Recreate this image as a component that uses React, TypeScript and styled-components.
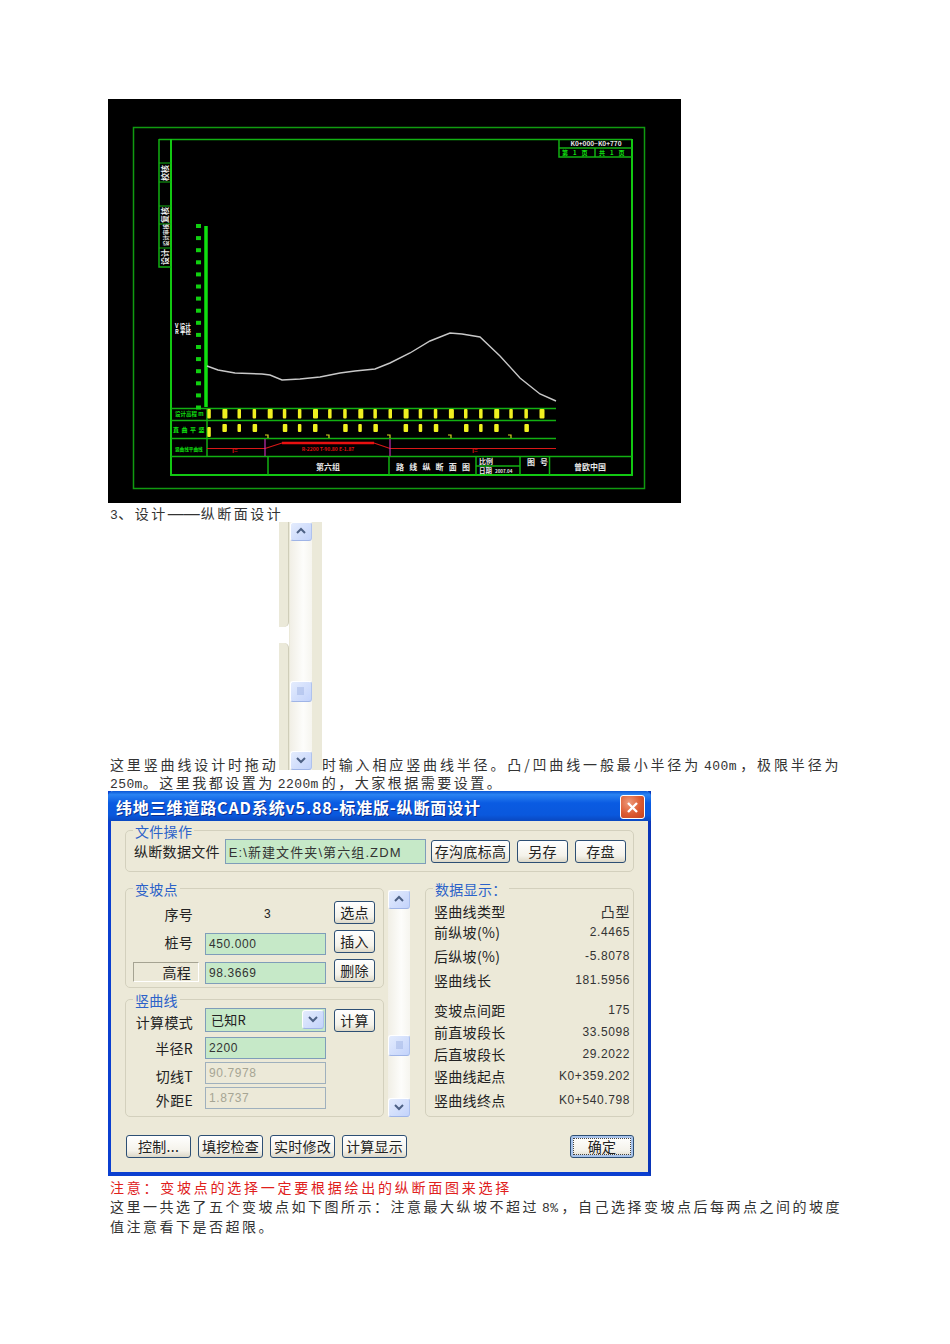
import styled, { createGlobalStyle } from "styled-components";

const GlobalStyle = createGlobalStyle`
  html, body {
    margin: 0;
    padding: 0;
    background: #fff;
  }
`;

const CJK = `"Noto Sans CJK SC", sans-serif`;
const LATIN = `"Liberation Mono", monospace`;
const NUM_FONT = `"Liberation Sans", "Noto Sans CJK SC", sans-serif`;
const COMMA = "\uFF0C";
const COLON = "\uFF1A";

// document
const Page = styled.div`
  box-sizing: border-box;
  width: 950px;
  height: 1344px;
  padding: 99px 0 0 108px;
  overflow: hidden;
`;

const Doc = styled.div<{ $top: number }>`
  width: 733px;
  margin-top: ${(p) => p.$top}px;
  font-family: ${CJK};
  font-size: 14px;
  color: #333;
`;

const Line = styled.div<{ $fit?: boolean; $red?: boolean; $pull?: number }>`
  margin-top: ${(p) => p.$pull ?? 0}px;
  padding-left: 2px;
  line-height: 19.5px;
  letter-spacing: ${(p) => (p.$red ? 2.75 : 2.5)}px;
  white-space: nowrap;
  color: ${(p) => (p.$red ? "#e0201c" : "#333")};
  text-align: ${(p) => (p.$fit ? "justify" : "left")};
  text-align-last: ${(p) => (p.$fit ? "justify" : "left")};
`;

const Latin = styled.span`
  margin: 0 3px;
  font-family: ${LATIN};
  font-size: 13px;
  line-height: 1;
  letter-spacing: 0.4px;
`;

const LeadLatin = styled(Latin)`
  margin: 0;
`;

const Dash = styled.span`
  margin: 0 1px 0 0;
  font-family: "Liberation Sans", sans-serif;
  font-size: 16px;
  line-height: 1;
  letter-spacing: 0;
`;

const CadFrame = styled.svg`
  display: block;
  width: 573px;
  height: 404px;
  background: #000;
`;

// xp scrollbar
const ScrollBox = styled.span`
  display: inline-block;
  overflow: hidden;
  width: 43px;
  height: 248px;
`;

const ScrollInner = styled.span`
  display: flex;
  height: 100%;
  background: #ebe9d9;
`;

const ScrollEdge = styled.span`
  display: flex;
  flex-direction: column;
  width: 10px;
  background: #fff;
`;

const EdgeTop = styled.span`
  display: block;
  height: 105px;
  background: #ebe9d9;
  border-right: 1px solid #cfcdb9;
  border-bottom-right-radius: 5px;
`;

const EdgeBottom = styled.span`
  display: block;
  flex: 1;
  margin-top: 16px;
  background: #ebe9d9;
  border-right: 1px solid #cfcdb9;
  border-top-right-radius: 5px;
`;

const Track = styled.span<{ $narrow?: boolean }>`
  display: flex;
  flex-direction: column;
  box-sizing: border-box;
  width: 22px;
  height: 100%;
  background: linear-gradient(90deg, #f1efe6 0%, #fdfdfb 60%, #f6f5ef 100%);
  ${(p) => (p.$narrow ? "" : "margin-left: 1px;")}
`;

const ScrollCap = styled.span`
  display: flex;
  align-items: center;
  justify-content: center;
  box-sizing: border-box;
  flex: none;
  width: 22px;
  height: 19px;
  background: linear-gradient(135deg, #e4ecfd 0%, #c3d3fb 100%);
  border: 1px solid #fff;
  border-bottom-color: #9fb4e6;
  border-right-color: #afc2ee;
  border-radius: 3px;
`;

const ScrollThumb = styled(ScrollCap)<{ $top: number }>`
  height: 21px;
  margin-top: ${(p) => p.$top}px;
`;

const Spring = styled.span`
  flex: 1;
`;

const Chevron = ({ up }: { up?: boolean }) => (
  <svg width="10" height="8" viewBox="0 0 10 8">
    <path
      d={up ? "M1 6 L5 2 L9 6" : "M1 2 L5 6 L9 2"}
      fill="none"
      stroke="#4d6185"
      strokeWidth="2"
    />
  </svg>
);

const Grip = () => (
  <svg width="9" height="9" viewBox="0 0 9 9">
    <path d="M1 1 H8 M1 3 H8 M1 5 H8 M1 7 H8" stroke="#a0b4e4" strokeWidth="1" />
  </svg>
);

const Scrollbar = ({ thumbTop, narrow }: { thumbTop: number; narrow?: boolean }) => (
  <Track $narrow={narrow}>
    <ScrollCap>
      <Chevron up />
    </ScrollCap>
    <ScrollThumb $top={thumbTop}>
      <Grip />
    </ScrollThumb>
    <Spring />
    <ScrollCap>
      <Chevron />
    </ScrollCap>
  </Track>
);

// dialog
const Dialog = styled.div`
  box-sizing: border-box;
  width: 543px;
  height: 385px;
  margin-top: -2px;
  background: #ece9d8;
  border: 3px solid #0b3fd0;
  border-top: 0;
  border-bottom-width: 4px;
  border-right-color: #0a35b8;
  font-family: ${CJK};
  font-size: 14px;
  letter-spacing: 0.3px;
  color: #222;
`;

const TitleBar = styled.div`
  display: flex;
  align-items: center;
  justify-content: space-between;
  box-sizing: border-box;
  height: 30px;
  margin: 0 -3px;
  padding: 3px 6px 0 8px;
  background: linear-gradient(180deg, #0a57d6 0%, #2a83f2 12%, #0a5be2 40%, #0a58dd 80%, #0a48c0 100%);
  border-radius: 5px 5px 0 0;
`;

const TitleText = styled.div`
  font-size: 16px;
  font-weight: 700;
  letter-spacing: 0.85px;
  color: #fff;
  text-shadow: 1px 1px 0 #0a2f90;
  white-space: nowrap;
`;

const CloseButton = styled.div`
  display: flex;
  align-items: center;
  justify-content: center;
  box-sizing: border-box;
  width: 25px;
  height: 24px;
  background: radial-gradient(circle at 35% 30%, #ee9a7a 0%, #dc5a30 55%, #c4411f 100%);
  border: 1px solid #fff;
  border-radius: 3px;
`;

const DialogBody = styled.div`
  display: flex;
  flex-direction: column;
  padding: 2px 14px 0;
`;

const Group = styled.fieldset<{ $gapTop?: number; $width?: number }>`
  box-sizing: border-box;
  min-width: 0;
  width: ${(p) => (p.$width ? `${p.$width}px` : "auto")};
  margin: ${(p) => p.$gapTop ?? 0}px 0 0;
  padding: 0;
  border: 1px solid #d3d0bd;
  border-radius: 5px;
`;

const GroupTitle = styled.legend`
  margin-left: 7px;
  padding: 0 2px;
  font-size: 14px;
  line-height: 16px;
  color: #2b62c9;
`;

const FileRow = styled.div`
  display: flex;
  align-items: center;
  height: 25px;
  padding: 0 7px 7px 8px;
`;

const FileLabel = styled.span`
  width: 91px;
  white-space: nowrap;
`;

const TextBox = styled.div<{ $disabled?: boolean; $width?: number }>`
  display: flex;
  align-items: center;
  box-sizing: border-box;
  width: ${(p) => p.$width ?? 121}px;
  height: 22px;
  padding: 0 3px;
  background: ${(p) => (p.$disabled ? "#ece9d8" : "#c6e9c8")};
  border: 1px solid ${(p) => (p.$disabled ? "#9fb0bd" : "#7f9db9")};
  font-family: ${NUM_FONT};
  font-size: 12px;
  letter-spacing: 0.6px;
  color: ${(p) => (p.$disabled ? "#a6a594" : "#333")};
  white-space: nowrap;
  overflow: hidden;
`;

const PathBox = styled(TextBox)`
  height: 25px;
  font-size: 13px;
  letter-spacing: 1.1px;
`;

const XpButton = styled.div<{ $width?: number; $main?: boolean; $offset?: number }>`
  display: flex;
  align-items: center;
  justify-content: center;
  box-sizing: border-box;
  flex: none;
  width: ${(p) => p.$width ?? 41}px;
  height: 23px;
  margin-top: ${(p) => p.$offset ?? 0}px;
  margin-left: ${(p) => (p.$main ? "auto" : "0")};
  background: linear-gradient(180deg, #fff 0%, #f4f2ea 70%, #dcd8c8 100%);
  border: 1px solid #2d4f74;
  border-radius: 3px;
  box-shadow: ${(p) => (p.$main ? "inset 0 0 0 2px #a9c4ec" : "none")};
  outline: ${(p) => (p.$main ? "1px dotted #444" : "none")};
  outline-offset: -4px;
  font-size: 14px;
  line-height: 1;
  color: #222;
  white-space: nowrap;
`;

const FileActions = styled.div`
  display: flex;
  margin-left: 5px;
  gap: 7px;
`;

const LowerRow = styled.div`
  display: flex;
  align-items: stretch;
  margin-top: 9px;
`;

const LeftColumn = styled.div`
  display: flex;
  flex-direction: column;
  width: 259px;
`;

const FormRows = styled.div<{ $top: number; $bottom: number }>`
  display: flex;
  flex-direction: column;
  gap: 4px;
  padding: ${(p) => p.$top}px 8px ${(p) => p.$bottom}px 7px;
`;

const FormRow = styled.div<{ $height?: number }>`
  display: grid;
  grid-template-columns: 66px 121px 43px;
  column-gap: 6px;
  align-items: start;
  height: ${(p) => p.$height ?? 25}px;
  & > :nth-child(3) {
    margin-left: 2px;
  }
`;

const FormLabel = styled.div<{ $sunken?: boolean; $offset?: number }>`
  box-sizing: border-box;
  height: ${(p) => (p.$sunken ? 20 : 22)}px;
  margin-top: ${(p) => p.$offset ?? 0}px;
  padding-right: ${(p) => (p.$sunken ? 7 : 6)}px;
  text-align: right;
  line-height: ${(p) => (p.$sunken ? 18 : 22)}px;
  white-space: nowrap;
  border: ${(p) => (p.$sunken ? "1px solid" : "0")};
  border-color: #a5a392 #fff #fff #a5a392;
`;

const Value = styled.div`
  margin-top: 2px;
  padding-left: 59px;
  font-family: ${NUM_FONT};
  font-size: 12px;
  line-height: 22px;
`;

const InputSlot = styled.div<{ $offset?: number }>`
  margin-top: ${(p) => p.$offset ?? 0}px;
`;

const Combo = styled.div`
  display: flex;
  box-sizing: border-box;
  width: 121px;
  height: 24px;
  background: #c6e9c8;
  border: 1px solid #7f9db9;
  padding: 1px;
`;

const ComboText = styled.div`
  flex: 1;
  padding-left: 4px;
  font-size: 13px;
  line-height: 19px;
`;

const ScrollSlot = styled.div`
  display: flex;
  flex: none;
  margin: 9px 15px 0 4px;
`;

const DataRows = styled.div`
  display: flex;
  flex-direction: column;
  padding: 3px 3px 3px 8px;
`;

const DataRow = styled.div<{ $space: number }>`
  display: flex;
  align-items: center;
  justify-content: space-between;
  height: 22px;
  margin-top: ${(p) => p.$space}px;
`;

const DataValue = styled.span<{ $word?: boolean }>`
  font-family: ${NUM_FONT};
  font-size: ${(p) => (p.$word ? 14 : 12)}px;
  letter-spacing: 0.6px;
  color: #333;
`;

const BottomBar = styled.div`
  display: flex;
  gap: 7px;
  margin-top: 18px;
  padding-left: 1px;
`;

const dataRows = [
  { label: "竖曲线类型", value: "凸型", space: 0, word: true },
  { label: "前纵坡(%)", value: "2.4465", space: -1 },
  { label: "后纵坡(%)", value: "-5.8078", space: 2 },
  { label: "竖曲线长", value: "181.5956", space: 2 },
  { label: "变坡点间距", value: "175", space: 8 },
  { label: "前直坡段长", value: "33.5098", space: 0 },
  { label: "后直坡段长", value: "29.2022", space: 0 },
  { label: "竖曲线起点", value: "K0+359.202", space: 0 },
  { label: "竖曲线终点", value: "K0+540.798", space: 2 },
];

// cad drawing, coordinates are picture pixels
const profile: [number, number][] = [
  [99, 267], [110, 271], [127, 274], [154, 275], [162, 276], [174, 281], [192, 280], [212, 278],
  [232, 274], [247, 272], [267, 270], [282, 264], [302, 254], [322, 242], [342, 234], [354, 235],
  [372, 238], [392, 257], [412, 279], [432, 295], [448, 302],
];

const markX = Array.from({ length: 23 }, (_, i) => 101.3 + i * 15.1);
const tickY = Array.from({ length: 16 }, (_, i) => 127 + i * 12.1);
const lowRowSkip = [4, 8, 12, 16, 20, 22];
const hookX = [157, 218, 279, 340, 400];

const CadLabel = styled.text`
  font-family: ${CJK};
  font-weight: 700;
`;

const CadDrawing = () => (
  <CadFrame viewBox="0 0 573 404">
    <g fill="none">
      <rect x="25.5" y="28.5" width="511" height="361" stroke="#109a10" strokeWidth="1.5" />
      <path d="M51 40.5 H524" stroke="#12b012" strokeWidth="1.5" />
      <path d="M524 40 V376 H63 V40" stroke="#12c812" strokeWidth="2" />
      <path d="M51 40 V168 H63" stroke="#12b012" strokeWidth="1.5" />
      <path d="M51 64 H63 M51 83 H63 M51 107 H63 M51 125 H63 M51 149 H63" stroke="#12b012" />
      <path d="M451 40 V58 H524 M451 49 H524 M487 49 V58" stroke="#12b012" strokeWidth="1.5" />
      <path d="M63 309.5 H448 M63 321.5 H448 M63 339.5 H448 M63 357.5 H524" stroke="#12b012" strokeWidth="1.5" />
      <path d="M99 309 V357" stroke="#12b012" strokeWidth="1.5" />
      <path d="M160 357 V376 M281 357 V376 M368 357 V376 M412 357 V376 M441.5 357 V376 M368 367 H412" stroke="#12b012" strokeWidth="1.5" />
      <path d="M98 127 V308" stroke="#0fe00f" strokeWidth="3.5" />
    </g>
    {tickY.map((y) => (
      <rect key={y} x="88" y={y - 2} width="5" height="4" fill="#10d010" />
    ))}
    <polyline
      points={profile.map((p) => p.join(",")).join(" ")}
      fill="none"
      stroke="#c8c8c8"
      strokeWidth="1.4"
    />
    {markX.map((x, i) => (
      <rect key={x} x={x - 2} y="310" width={i % 3 === 1 ? 5 : 3.5} height="9.5" rx="1" fill="#f0f020" />
    ))}
    {markX.map((x, i) =>
      lowRowSkip.includes(i) ? null : (
        <rect key={x} x={x - 2} y={i === 0 ? 328 : 325} width={i % 2 ? 4.5 : 3.5} height={i === 0 ? 10 : 8} rx="1" fill="#f0f020" />
      )
    )}
    {hookX.map((x) => (
      <path key={x} d={`M${x} 336 h3 v3`} fill="none" stroke="#d8d820" strokeWidth="1.2" />
    ))}
    <path d="M99 349.5 H157 L174 344 H266 L282 349.5 H448" fill="none" stroke="#d81818" strokeWidth="1.2" />
    <path d="M174 344 H266" stroke="#e81010" strokeWidth="2.5" />
    <path d="M157 340 V357 M282 340 V357" stroke="#c030b0" strokeWidth="1.2" />
    <CadLabel x="67" y="317" fontSize="5.5" fill="#10e010">设计高程 m</CadLabel>
    <CadLabel x="65" y="333" fontSize="6" fill="#10e010" letterSpacing="2.5">直曲平竖</CadLabel>
    <CadLabel x="67" y="352" fontSize="4.6" fill="#10e010">竖曲线平曲线</CadLabel>
    <CadLabel x="67" y="229" fontSize="5.5" fill="#fff">V 设计</CadLabel>
    <CadLabel x="67" y="235" fontSize="5.5" fill="#fff">R 半径</CadLabel>
    <CadLabel x="124" y="354" fontSize="6" fill="#e01010">I=</CadLabel>
    <CadLabel x="364" y="354" fontSize="6" fill="#e01010">I=</CadLabel>
    <CadLabel x="220" y="352" fontSize="5" fill="#e01010" textAnchor="middle">R-2200 T-90.80 E-1.87</CadLabel>
    <CadLabel x="220" y="371" fontSize="8" fill="#e8e8e8" textAnchor="middle">第六组</CadLabel>
    <CadLabel x="288" y="371" fontSize="8" fill="#e8e8e8" letterSpacing="5.2">路线纵断面图</CadLabel>
    <CadLabel x="371" y="365" fontSize="7" fill="#e8e8e8">比例</CadLabel>
    <CadLabel x="371" y="374" fontSize="6.5" fill="#e8e8e8">日期</CadLabel>
    <CadLabel x="387" y="374" fontSize="4.5" fill="#e8e8e8">2007.04</CadLabel>
    <CadLabel x="419" y="366" fontSize="8" fill="#e8e8e8" letterSpacing="5">图号</CadLabel>
    <CadLabel x="482" y="371" fontSize="8" fill="#e8e8e8" textAnchor="middle">曾欧中国</CadLabel>
    <CadLabel x="488" y="47" fontSize="6.5" fill="#e8e8e8" textAnchor="middle">K0+000~K0+770</CadLabel>
    <CadLabel x="454" y="56" fontSize="6" fill="#10e010" letterSpacing="5">第1页</CadLabel>
    <CadLabel x="491" y="56" fontSize="6" fill="#10e010" letterSpacing="5">共1页</CadLabel>
    <CadLabel transform="translate(60 82) rotate(-90)" fontSize="8" fill="#eee">校核</CadLabel>
    <CadLabel transform="translate(60 124) rotate(-90)" fontSize="8" fill="#eee">复核</CadLabel>
    <CadLabel transform="translate(60 147) rotate(-90)" fontSize="5.5" fill="#eee">设计审核</CadLabel>
    <CadLabel transform="translate(60 166) rotate(-90)" fontSize="8" fill="#eee">设计</CadLabel>
  </CadFrame>
);

const App = () => {
  return (
    <>
      <GlobalStyle />
      <Page>
        <CadDrawing />
        <Doc $top={1}>
          <Line>
            <LeadLatin>3</LeadLatin>、设计<Dash>——</Dash>纵断面设计
          </Line>
          <Line $fit $pull={-2}>
            这里竖曲线设计时拖动
            <ScrollBox>
              <ScrollInner>
                <ScrollEdge>
                  <EdgeTop />
                  <EdgeBottom />
                </ScrollEdge>
                <Scrollbar thumbTop={140} />
              </ScrollInner>
            </ScrollBox>
            时输入相应竖曲线半径。凸/凹曲线一般最小半径为<Latin>400m</Latin>{COMMA}极限半径为
          </Line>
          <Line $pull={-1}>
            <LeadLatin>250m</LeadLatin>。这里我都设置为<Latin>2200m</Latin>的{COMMA}大家根据需要设置。
          </Line>
        </Doc>
        <Dialog>
          <TitleBar>
            <TitleText>纬地三维道路CAD系统v5.88-标准版-纵断面设计</TitleText>
            <CloseButton>
              <svg width="13" height="13" viewBox="0 0 13 13">
                <path d="M2 2 L11 11 M11 2 L2 11" stroke="#fff" strokeWidth="2.4" />
              </svg>
            </CloseButton>
          </TitleBar>
          <DialogBody>
            <Group>
              <GroupTitle>文件操作</GroupTitle>
              <FileRow>
                <FileLabel>纵断数据文件</FileLabel>
                <PathBox $width={202}>E:\新建文件夹\第六组.ZDM</PathBox>
                <FileActions>
                  <XpButton $width={79}>存沟底标高</XpButton>
                  <XpButton $width={51}>另存</XpButton>
                  <XpButton $width={51}>存盘</XpButton>
                </FileActions>
              </FileRow>
            </Group>
            <LowerRow>
              <LeftColumn>
                <Group>
                  <GroupTitle>变坡点</GroupTitle>
                  <FormRows $top={4} $bottom={3}>
                    <FormRow>
                      <FormLabel $offset={2}>序号</FormLabel>
                      <Value>3</Value>
                      <XpButton>选点</XpButton>
                    </FormRow>
                    <FormRow>
                      <FormLabel $offset={1}>桩号</FormLabel>
                      <InputSlot $offset={3}>
                        <TextBox>450.000</TextBox>
                      </InputSlot>
                      <XpButton>插入</XpButton>
                    </FormRow>
                    <FormRow>
                      <FormLabel $sunken $offset={3}>高程</FormLabel>
                      <InputSlot $offset={3}>
                        <TextBox>98.3669</TextBox>
                      </InputSlot>
                      <XpButton>删除</XpButton>
                    </FormRow>
                  </FormRows>
                </Group>
                <Group $gapTop={4}>
                  <GroupTitle>竖曲线</GroupTitle>
                  <FormRows $top={0} $bottom={8}>
                    <FormRow>
                      <FormLabel $offset={3}>计算模式</FormLabel>
                      <Combo>
                        <ComboText>已知R</ComboText>
                        <ScrollCap>
                          <Chevron />
                        </ScrollCap>
                      </Combo>
                      <XpButton $offset={1}>计算</XpButton>
                    </FormRow>
                    <FormRow $height={21}>
                      <FormLabel>半径R</FormLabel>
                      <TextBox>2200</TextBox>
                    </FormRow>
                    <FormRow $height={21}>
                      <FormLabel $offset={3}>切线T</FormLabel>
                      <TextBox $disabled>90.7978</TextBox>
                    </FormRow>
                    <FormRow $height={21}>
                      <FormLabel $offset={2}>外距E</FormLabel>
                      <TextBox $disabled>1.8737</TextBox>
                    </FormRow>
                  </FormRows>
                </Group>
              </LeftColumn>
              <ScrollSlot>
                <Scrollbar thumbTop={126} narrow />
              </ScrollSlot>
              <Group $width={209}>
                <GroupTitle>数据显示{COLON}</GroupTitle>
                <DataRows>
                  {dataRows.map((row) => (
                    <DataRow key={row.label} $space={row.space}>
                      <span>{row.label}</span>
                      <DataValue $word={row.word}>{row.value}</DataValue>
                    </DataRow>
                  ))}
                </DataRows>
              </Group>
            </LowerRow>
            <BottomBar>
              <XpButton $width={65}>控制...</XpButton>
              <XpButton $width={65}>填挖检查</XpButton>
              <XpButton $width={65}>实时修改</XpButton>
              <XpButton $width={65}>计算显示</XpButton>
              <XpButton $width={64} $main>确定</XpButton>
            </BottomBar>
          </DialogBody>
        </Dialog>
        <Doc $top={2}>
          <Line $red>注意{COLON}变坡点的选择一定要根据绘出的纵断面图来选择</Line>
          <Line $fit>
            这里一共选了五个变坡点如下图所示{COLON}注意最大纵坡不超过<Latin>8%</Latin>{COMMA}自己选择变坡点后每两点之间的坡度
          </Line>
          <Line>值注意看下是否超限。</Line>
        </Doc>
      </Page>
    </>
  );
};

export default App;
